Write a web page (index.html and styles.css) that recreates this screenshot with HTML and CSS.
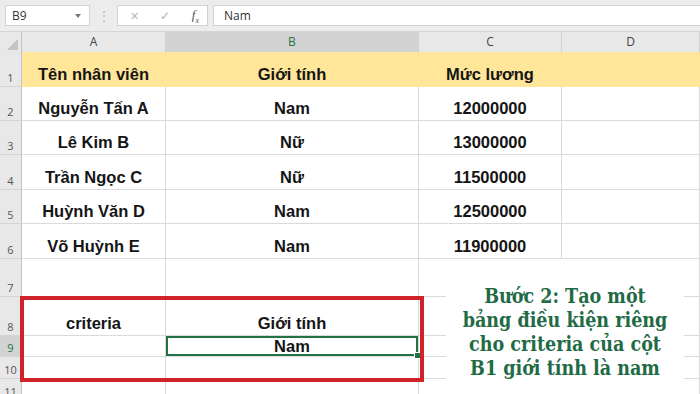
FILE: index.html
```html
<!DOCTYPE html>
<html lang="vi">

<head>
    <meta charset="UTF-8">
    <meta name="viewport" content="width=device-width, initial-scale=1.0">
    <title>Bước 2 - criteria</title>

    <link rel="stylesheet" href="styles.css">
</head>

<body>
    <div class="toolbar">
        <div class="name-box">
            <span>B9</span>
            <span class="caret"></span>
        </div>
        <div class="grip">&#8942;</div>
        <div class="func-box">
            <span class="icon-x">&#10005;</span>
            <span class="icon-ok">&#10003;</span>
            <span class="icon-fx">f<sub>x</sub></span>
        </div>
        <div class="formula">Nam</div>
    </div>

    <div class="sheet">
        <div class="row head">
            <div class="corner"><span class="tri"></span></div>
            <div class="col">A</div>
            <div class="col active">B</div>
            <div class="col">C</div>
            <div class="col">D</div>
        </div>

        <div class="row h35">
            <div class="num">1</div>
            <div class="cell fill">Tên nhân viên</div>
            <div class="cell fill">Giới tính</div>
            <div class="cell fill">Mức lương</div>
            <div class="cell fill"></div>
        </div>
        <div class="row">
            <div class="num">2</div>
            <div class="cell">Nguyễn Tấn A</div>
            <div class="cell">Nam</div>
            <div class="cell">12000000</div>
            <div class="cell"></div>
        </div>
        <div class="row">
            <div class="num">3</div>
            <div class="cell">Lê Kim B</div>
            <div class="cell">Nữ</div>
            <div class="cell">13000000</div>
            <div class="cell"></div>
        </div>
        <div class="row h35">
            <div class="num">4</div>
            <div class="cell">Trần Ngọc C</div>
            <div class="cell">Nữ</div>
            <div class="cell">11500000</div>
            <div class="cell"></div>
        </div>
        <div class="row">
            <div class="num">5</div>
            <div class="cell">Huỳnh Văn D</div>
            <div class="cell">Nam</div>
            <div class="cell">12500000</div>
            <div class="cell"></div>
        </div>
        <div class="row h35">
            <div class="num">6</div>
            <div class="cell">Võ Huỳnh E</div>
            <div class="cell">Nam</div>
            <div class="cell">11900000</div>
            <div class="cell"></div>
        </div>
        <div class="row h38">
            <div class="num">7</div>
            <div class="cell"></div>
            <div class="cell"></div>
            <div class="cell"></div>
            <div class="cell"></div>
        </div>
        <div class="row h39">
            <div class="num">8</div>
            <div class="cell">criteria</div>
            <div class="cell">Giới tính</div>
            <div class="cell"></div>
            <div class="cell"></div>
        </div>
        <div class="row h21">
            <div class="num active">9</div>
            <div class="cell"></div>
            <div class="cell selected">Nam</div>
            <div class="cell"></div>
            <div class="cell"></div>
        </div>
        <div class="row h22">
            <div class="num">10</div>
            <div class="cell"></div>
            <div class="cell"></div>
            <div class="cell"></div>
            <div class="cell"></div>
        </div>
        <div class="row h22">
            <div class="num">11</div>
            <div class="cell"></div>
            <div class="cell"></div>
            <div class="cell"></div>
            <div class="cell"></div>
        </div>

        <div class="highlight"></div>

        <div class="note">
            <p>Bước 2: Tạo một</p>
            <p>bảng điều kiện riêng</p>
            <p>cho criteria của cột</p>
            <p>B1 giới tính là nam</p>
        </div>
    </div>
</body>

</html>
```

FILE: styles.css
```css
body {
    margin: 0;
    width: 700px;
    height: 394px;
    overflow: hidden;
    background-color: white;
    font-family: "Liberation Sans", Arial, sans-serif;
}

/* formula bar */
.toolbar {
    height: 32px;
    box-sizing: border-box;
    padding: 5px 0 5px 5px;
    display: flex;
    gap: 5px;
    background-color: #ececec;
    border-bottom: 1px solid #d6d6d6;
    font-family: "Open Sans", sans-serif;
    font-size: 12px;
    color: #333;
}

.name-box,
.func-box,
.formula {
    background-color: white;
    border: 1px solid #d2d2d2;
    box-sizing: border-box;
    height: 21px;
    display: flex;
    align-items: center;
}

.name-box {
    width: 85px;
    padding: 0 6px;
    justify-content: space-between;
}

.caret {
    width: 0;
    height: 0;
    border-left: 3px solid transparent;
    border-right: 3px solid transparent;
    border-top: 4px solid #777;
    margin-right: 2px;
}

.grip {
    width: 17px;
    text-align: center;
    color: #b5b5b5;
    line-height: 21px;
}

.func-box {
    width: 91px;
    padding: 0 8px 0 12px;
    justify-content: space-between;
    color: #b8b8b8;
}

.icon-x {
    font-size: 11px;
}

.icon-ok {
    font-size: 12px;
}

.icon-fx {
    font-family: "Liberation Serif", serif;
    font-style: italic;
    font-size: 13px;
    color: #555;
}

.icon-fx sub {
    font-size: 8px;
}

.formula {
    flex: 1;
    border-right: none;
    padding-left: 10px;
}

/* grid */
.sheet {
    position: relative;
}

.row {
    display: grid;
    grid-template-columns: 22px 144px 253px 143px 1fr;
    height: 34px;
}

.h35 { height: 35px; }
.h38 { height: 38px; }
.h39 { height: 39px; }
.h21 { height: 21px; }
.h22 { height: 22px; }

.head {
    height: 20px;
    background-color: #e8e8e8;
}

.corner {
    border-right: 1px solid #c4c4c4;
    border-bottom: 1px solid #c4c4c4;
    display: flex;
    justify-content: flex-end;
    align-items: flex-end;
    padding: 0 3px 3px 0;
}

.tri {
    width: 0;
    height: 0;
    border-left: 11px solid transparent;
    border-bottom: 11px solid #c3c3c3;
}

.col {
    border-right: 1px solid #d0d0d0;
    border-bottom: 1px solid #c4c4c4;
    font-family: "Open Sans", sans-serif;
    font-size: 12px;
    color: #444;
    text-align: center;
    line-height: 20px;
}

.col.active {
    background-color: #d3d3d3;
    border-bottom: 2px solid #217346;
    color: #217346;
}

.num {
    background-color: #e8e8e8;
    border-right: 1px solid #c4c4c4;
    border-bottom: 1px solid #d4d4d4;
    font-family: "Open Sans", sans-serif;
    font-size: 11px;
    color: #555;
    display: flex;
    align-items: flex-end;
    justify-content: center;
    padding-bottom: 1px;
    box-sizing: border-box;
}

.num.active {
    background-color: #d3d3d3;
    color: #217346;
}

.cell {
    border-right: 1px solid #dadada;
    border-bottom: 1px solid #dadada;
    box-sizing: border-box;
    display: flex;
    align-items: flex-end;
    justify-content: center;
    padding-bottom: 2px;
    font-size: 16.5px;
    font-weight: bold;
    color: #151515;
}

.fill {
    background-color: #ffe699;
    border-color: #ffe699;
}

.selected {
    position: relative;
    box-shadow: inset 0 0 0 2px #217346;
    padding-bottom: 0;
}

.selected::after {
    content: "";
    position: absolute;
    right: -3px;
    bottom: -3px;
    width: 5px;
    height: 5px;
    background-color: #217346;
    border: 1px solid white;
}

/* overlays */
.highlight {
    position: absolute;
    left: 20px;
    top: 264px;
    width: 404px;
    height: 86px;
    box-sizing: border-box;
    border: 4px solid #cf2229;
}

.note {
    position: absolute;
    left: 446px;
    top: 227px;
    width: 238px;
    height: 135px;
    box-sizing: border-box;
    padding-top: 26px;
    background-color: white;
    font-family: "DejaVu Serif Condensed", "DejaVu Serif", serif;
    font-stretch: condensed;
    font-weight: bold;
    font-size: 19.5px;
    line-height: 24px;
    color: #1f6b45;
    text-align: center;
}

.note p {
    margin: 0;
    white-space: nowrap;
}
```
